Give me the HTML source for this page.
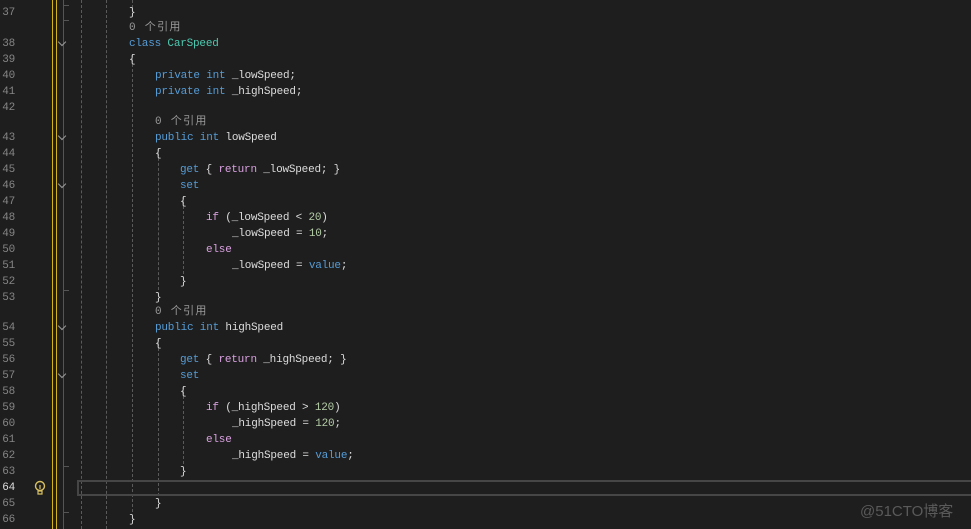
<!DOCTYPE html>
<html><head><meta charset="utf-8"><style>
body{margin:0;width:971px;height:529px;background:#1e1e1e;overflow:hidden;position:relative;font-family:"Liberation Mono","Noto Sans CJK SC",monospace;font-size:11px;letter-spacing:-0.2px}
.l{position:absolute;height:16px;line-height:16px;white-space:pre;color:#dcdcdc}
.n{position:absolute;width:15px;text-align:right;left:0;height:16px;line-height:16px;color:#858585;font-size:11px}
.k{color:#569cd6}.c{color:#4ec9b0}.p{color:#d8a0df}.d{color:#b5cea8}.g{color:#999;font-family:"Liberation Mono","Noto Sans CJK SC",monospace;letter-spacing:1.3px}
.v{position:absolute;width:0;border-left:1px dashed #5a5a5a}
.ch{position:absolute;left:59px;width:5px;height:5px;border-right:1px solid #999;border-bottom:1px solid #999;transform:rotate(45deg)}
</style></head><body>
<div style="position:absolute;left:52px;top:0;width:3px;height:529px;border-left:1px solid #d8b318;border-right:1px solid #d8b318;background:#1e1e1e"></div>
<div style="position:absolute;left:63px;top:0;width:1px;height:529px;background:#555"></div>
<div style="position:absolute;left:63px;top:20px;width:6px;height:1px;background:#555"></div>
<div style="position:absolute;left:63px;top:5px;width:6px;height:1px;background:#555"></div>
<div style="position:absolute;left:63px;top:290px;width:6px;height:1px;background:#555"></div>
<div style="position:absolute;left:63px;top:466px;width:6px;height:1px;background:#555"></div>
<div style="position:absolute;left:63px;top:512px;width:6px;height:1px;background:#555"></div>
<div class="v" style="left:81px;top:0;height:529px"></div>
<div class="v" style="left:106px;top:0;height:529px"></div>
<div class="v" style="left:132px;top:0;height:8px"></div>
<div class="v" style="left:132px;top:54px;height:458px"></div>
<div class="v" style="left:158px;top:148px;height:142px"></div>
<div class="v" style="left:158px;top:338px;height:158px"></div>
<div class="v" style="left:183px;top:196px;height:78px"></div>
<div class="v" style="left:183px;top:386px;height:78px"></div>
<div style="position:absolute;left:77px;top:480px;width:900px;height:12px;border:1px solid #464646;border-width:2px 0 2px 2px"></div>
<div class="ch" style="top:39px"></div><div class="ch" style="top:133px"></div><div class="ch" style="top:181px"></div><div class="ch" style="top:323px"></div><div class="ch" style="top:371px"></div>
<svg style="position:absolute;left:33px;top:480px" width="14" height="17" viewBox="0 0 14 17"><circle cx="7" cy="6" r="4.5" fill="none" stroke="#d8c060" stroke-width="1.4"/><path d="M7 5v4M5 11h4v3H5z" fill="none" stroke="#d8c060" stroke-width="1.2"/></svg>
<div class="n" style="top:5px">37</div><div class="l" style="left:129px;top:5px">}</div>
<div class="l g" style="left:129px;top:20px">0 个引用</div>
<div class="n" style="top:36px">38</div><div class="l" style="left:129px;top:36px"><span class="k">class</span> <span class="c">CarSpeed</span></div>
<div class="n" style="top:52px">39</div><div class="l" style="left:129px;top:52px">{</div>
<div class="n" style="top:68px">40</div><div class="l" style="left:155px;top:68px"><span class="k">private int</span> _lowSpeed;</div>
<div class="n" style="top:84px">41</div><div class="l" style="left:155px;top:84px"><span class="k">private int</span> _highSpeed;</div>
<div class="n" style="top:100px">42</div>
<div class="l g" style="left:155px;top:114px">0 个引用</div>
<div class="n" style="top:130px">43</div><div class="l" style="left:155px;top:130px"><span class="k">public int</span> lowSpeed</div>
<div class="n" style="top:146px">44</div><div class="l" style="left:155px;top:146px">{</div>
<div class="n" style="top:162px">45</div><div class="l" style="left:180px;top:162px"><span class="k">get</span> { <span class="p">return</span> _lowSpeed; }</div>
<div class="n" style="top:178px">46</div><div class="l" style="left:180px;top:178px"><span class="k">set</span></div>
<div class="n" style="top:194px">47</div><div class="l" style="left:180px;top:194px">{</div>
<div class="n" style="top:210px">48</div><div class="l" style="left:206px;top:210px"><span class="p">if</span> (_lowSpeed &lt; <span class="d">20</span>)</div>
<div class="n" style="top:226px">49</div><div class="l" style="left:232px;top:226px">_lowSpeed = <span class="d">10</span>;</div>
<div class="n" style="top:242px">50</div><div class="l" style="left:206px;top:242px"><span class="p">else</span></div>
<div class="n" style="top:258px">51</div><div class="l" style="left:232px;top:258px">_lowSpeed = <span class="k">value</span>;</div>
<div class="n" style="top:274px">52</div><div class="l" style="left:180px;top:274px">}</div>
<div class="n" style="top:290px">53</div><div class="l" style="left:155px;top:290px">}</div>
<div class="l g" style="left:155px;top:304px">0 个引用</div>
<div class="n" style="top:320px">54</div><div class="l" style="left:155px;top:320px"><span class="k">public int</span> highSpeed</div>
<div class="n" style="top:336px">55</div><div class="l" style="left:155px;top:336px">{</div>
<div class="n" style="top:352px">56</div><div class="l" style="left:180px;top:352px"><span class="k">get</span> { <span class="p">return</span> _highSpeed; }</div>
<div class="n" style="top:368px">57</div><div class="l" style="left:180px;top:368px"><span class="k">set</span></div>
<div class="n" style="top:384px">58</div><div class="l" style="left:180px;top:384px">{</div>
<div class="n" style="top:400px">59</div><div class="l" style="left:206px;top:400px"><span class="p">if</span> (_highSpeed &gt; <span class="d">120</span>)</div>
<div class="n" style="top:416px">60</div><div class="l" style="left:232px;top:416px">_highSpeed = <span class="d">120</span>;</div>
<div class="n" style="top:432px">61</div><div class="l" style="left:206px;top:432px"><span class="p">else</span></div>
<div class="n" style="top:448px">62</div><div class="l" style="left:232px;top:448px">_highSpeed = <span class="k">value</span>;</div>
<div class="n" style="top:464px">63</div><div class="l" style="left:180px;top:464px">}</div>
<div class="n" style="top:480px;color:#dcdcdc">64</div>
<div class="n" style="top:496px">65</div><div class="l" style="left:155px;top:496px">}</div>
<div class="n" style="top:512px">66</div><div class="l" style="left:129px;top:512px">}</div>
<div style="position:absolute;left:860px;top:500px;font-family:'Liberation Sans','Noto Sans CJK SC',sans-serif;font-size:15px;color:#5a5a5a;letter-spacing:0">@51CTO博客</div>
</body></html>
